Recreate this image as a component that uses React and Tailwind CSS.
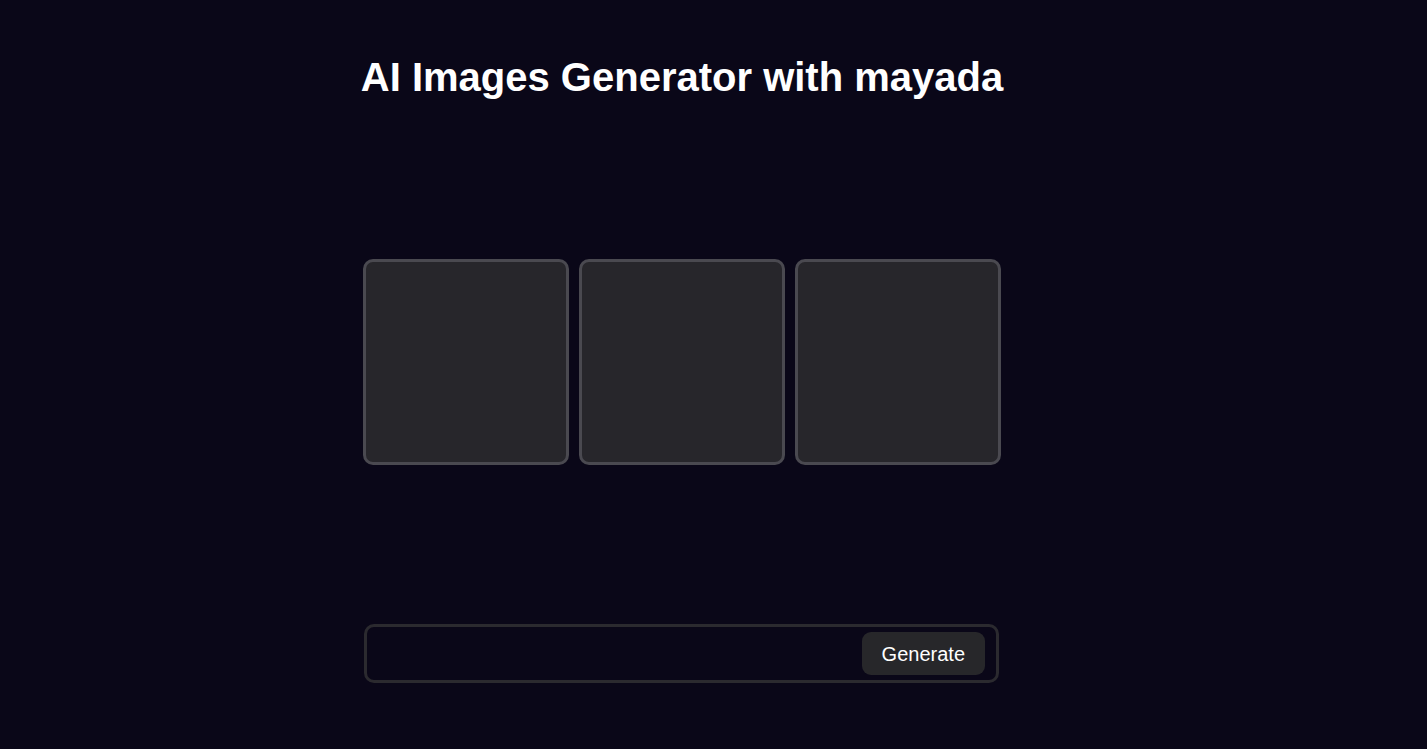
import { useState } from "react";

const slots = [1, 2, 3];

export default function App() {
  const [prompt, setPrompt] = useState("");

  return (
    <div
      className="min-h-[749px] w-full bg-[#0a0718] text-white"
      style={{ fontFamily: '"Liberation Sans", Arial, sans-serif' }}
    >
      <div className="flex flex-col items-center pr-[63px] pt-[54px]">
        {/* Title */}
        <h1 className="h-[46px] text-[40px] font-bold leading-[46px] tracking-normal">
          AI Images Generator with mayada
        </h1>

        {/* Image slots */}
        <div className="mt-[159px] flex gap-[10px]">
          {slots.map((n) => (
            <div
              key={n}
              className="h-[206px] w-[206px] rounded-[10px] border-[3px] border-[#4a4950] bg-[#27262b]"
            />
          ))}
        </div>

        {/* Prompt bar */}
        <div className="mt-[159px] ml-[-1px] flex w-[635px] items-center rounded-[10px] border-[3px] border-[#2b2a2f] py-[5px] pl-3 pr-[11px]">
          <input
            value={prompt}
            onChange={(e) => setPrompt(e.target.value)}
            className="h-[43px] flex-1 bg-transparent text-lg text-white outline-none"
          />
          <button className="h-[43px] rounded-[9px] bg-[#27272a] px-5 text-[20px] leading-none text-white">
            Generate
          </button>
        </div>
      </div>
    </div>
  );
}
